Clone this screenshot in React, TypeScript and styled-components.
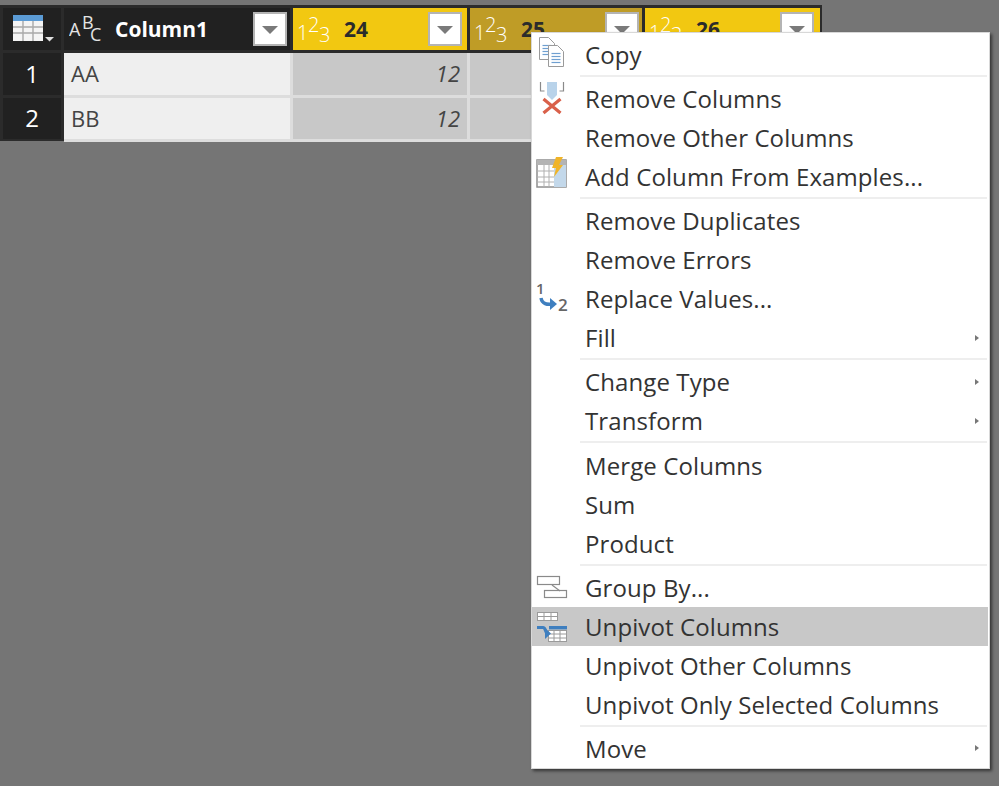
import React from "react";
import styled, { createGlobalStyle } from "styled-components";

const GlobalStyle = createGlobalStyle`
  html, body {
    margin: 0;
    padding: 0;
    background: #757575;
  }
  body {
    font-family: "Open Sans", "Noto Sans", sans-serif;
  }
`;

const Page = styled.div`
  position: relative;
  width: 999px;
  height: 786px;
  padding-top: 5px;
  box-sizing: border-box;
  overflow: hidden;
  background: #757575;
`;

const Table = styled.div`
  display: grid;
  width: 822px;
  box-sizing: border-box;
  grid-template-columns: 58px 226px 174px 172px 175px;
  grid-template-rows: 42px 42px 41px;
  column-gap: 3px;
  row-gap: 3px;
  padding: 3px 2px 2px 3px;
  background: #2b2b2b;
`;

const HeaderCell = styled.div<{ $bg: string; $right: number }>`
  display: flex;
  align-items: center;
  padding: 0 ${({ $right }) => $right}px 0 5px;
  background: ${({ $bg }) => $bg};
`;

const HeaderTitle = styled.span<{ $light?: boolean }>`
  flex: 1;
  margin-left: 10px;
  font-size: 21px;
  font-weight: 700;
  color: ${({ $light }) => ($light ? "#ffffff" : "#2b2b2b")};
`;

const FilterButton = styled.div`
  display: flex;
  flex: none;
  align-items: center;
  justify-content: center;
  width: 34px;
  height: 34px;
  box-sizing: border-box;
  border: 2px solid #b4b4b4;
  background: #ffffff;

  &::after {
    content: "";
    border-left: 8px solid transparent;
    border-right: 8px solid transparent;
    border-top: 8px solid #7a7a7a;
    margin-top: 1px;
  }
`;

const CornerCell = styled.div`
  display: flex;
  align-items: center;
  justify-content: center;
  padding-left: 4px;
  background: #212121;
`;

const RowNumber = styled.div`
  display: flex;
  align-items: center;
  justify-content: center;
  padding-bottom: 2px;
  background: #212121;
  color: #ffffff;
  font-size: 24px;
`;

const DataCell = styled.div<{ $numeric?: boolean }>`
  display: flex;
  align-items: center;
  justify-content: ${({ $numeric }) => ($numeric ? "flex-end" : "flex-start")};
  padding: 0 7px 2px;
  margin-bottom: -3px;
  border-bottom: 3px solid #dddddd;
  box-shadow: 3px 0 0 #dddddd;
  background: ${({ $numeric }) => ($numeric ? "#c8c8c8" : "#efefef")};
  color: #444444;
  font-size: 22px;
  font-style: ${({ $numeric }) => ($numeric ? "italic" : "normal")};
`;

const Menu = styled.div`
  position: absolute;
  left: 531px;
  top: 32px;
  width: 459px;
  height: 737px;
  box-sizing: border-box;
  padding: 2px 1px 0 0;
  background: #ffffff;
  border: 1px solid #d8d8d8;
  box-shadow: 2px 2px 3px rgba(0, 0, 0, 0.55);
`;

const MenuRow = styled.div<{ $active?: boolean }>`
  display: flex;
  align-items: center;
  height: 39px;
  background: ${({ $active }) => ($active ? "#c8c8c8" : "transparent")};
  color: #333333;
  font-size: 24px;
  letter-spacing: 0.1px;
`;

const IconSlot = styled.div`
  flex: none;
  width: 53px;
  height: 39px;
  padding-left: 2px;
  box-sizing: border-box;
`;

const Label = styled.span`
  flex: 1;
  white-space: nowrap;
`;

const SubArrow = styled.span`
  margin-right: 9px;
  border-left: 4px solid #777777;
  border-top: 3px solid transparent;
  border-bottom: 3px solid transparent;
`;

const Separator = styled.div`
  height: 2px;
  margin: 1px 1px 2.15px 48px;
  background: #eeeeee;
`;

const GlyphFont = "Open Sans, sans-serif";

const Svg: React.FC<{ children: React.ReactNode }> = ({ children }) => (
  <svg width="40" height="39" viewBox="0 0 40 39">
    {children}
  </svg>
);

const TableGlyph = () => (
  <svg width="42" height="28" viewBox="0 0 42 28">
    <rect x="0" y="0" width="30" height="26" fill="#f4f4f4" />
    <rect x="0" y="0" width="30" height="6" fill="#5b9bd5" />
    <path d="M0 12h30M0 18h30M10 6v20M20 6v20" stroke="#a8a8a8" strokeWidth="1.4" />
    <path d="M32 22h9l-4.5 4.5z" fill="#e0e0e0" />
  </svg>
);

const AbcGlyph = () => (
  <svg width="36" height="38" viewBox="0 0 36 38" fontFamily={GlyphFont} fill="#e4e4e4">
    <text x="0" y="26" fontSize="18">A</text>
    <text x="13" y="19" fontSize="18">B</text>
    <text x="21" y="31" fontSize="18">C</text>
  </svg>
);

const NumberGlyph = () => (
  <svg width="36" height="40" viewBox="0 0 36 40" fontFamily={GlyphFont} fontWeight="300" fill="#ffffff">
    <text x="-1" y="31" fontSize="20">1</text>
    <text x="10" y="23" fontSize="20">2</text>
    <text x="21" y="33" fontSize="20">3</text>
  </svg>
);

const Doc: React.FC<{ x: number; y: number; w: number; h: number }> = ({ x, y, w, h }) => {
  const lines: React.ReactNode[] = [];
  for (let ly = y + 8; ly < y + h - 2; ly += 3) {
    lines.push(<path key={ly} d={`M${x + 3} ${ly}h${w - 6}`} stroke="#6f9fd0" strokeWidth="1.2" />);
  }
  return (
    <g>
      <path
        d={`M${x} ${y}h${w - 6}l6 6v${h - 6}h${-w}z`}
        fill="#ffffff"
        stroke="#9a9a9a"
        strokeWidth="1"
      />
      {lines}
    </g>
  );
};

const CopyIcon = () => (
  <Svg>
    <Doc x={5.5} y={2.5} w={15} h={22} />
    <Doc x={14.5} y={10.5} w={15} h={21} />
  </Svg>
);

const RemoveIcon = () => (
  <Svg>
    <path d="M6.5 3v9h4M29.5 3v9h-4" fill="none" stroke="#8a8a8a" strokeWidth="1.2" />
    <path d="M13 3h10v13l-5 5-5-5z" fill="#b9d3ea" />
    <path d="M9.5 20l17 14M26.5 20l-17 14" stroke="#d9604a" strokeWidth="3.2" />
  </Svg>
);

const ExamplesIcon = () => (
  <Svg>
    <rect x="3" y="3" width="29" height="27" fill="#ffffff" stroke="#8f8f8f" strokeWidth="1.5" />
    <rect x="3" y="3" width="29" height="5" fill="#b4b4b4" />
    <rect x="20" y="8" width="12" height="22" fill="#c3d8ea" />
    <path d="M3 14h17M3 20h17M3 25h17M10 8v22M15 8v22" stroke="#b0b0b0" strokeWidth="1" />
    <path d="M22 0h7l-4 8h4l-9 12 2-9h-4z" fill="#f0b428" />
  </Svg>
);

const ReplaceIcon = () => (
  <Svg>
    <text x="2" y="15" fontSize="15" fontFamily={GlyphFont} fontWeight="600" fill="#666666">1</text>
    <path d="M7 19c1 6 6 7 12 6" fill="none" stroke="#3f7fbf" strokeWidth="3.4" />
    <path d="M16 19l7 6-7 6z" fill="#3f7fbf" />
    <text x="24" y="32" fontSize="17" fontFamily={GlyphFont} fontWeight="600" fill="#666666">2</text>
  </Svg>
);

const GroupIcon = () => (
  <Svg>
    <rect x="3.5" y="8.5" width="22" height="8" fill="#ffffff" stroke="#8a8a8a" strokeWidth="1.2" />
    <rect x="10.5" y="22.5" width="22" height="7" fill="#ffffff" stroke="#8a8a8a" strokeWidth="1.2" />
    <path d="M18 17l8 6" stroke="#8a8a8a" strokeWidth="1.2" />
  </Svg>
);

const UnpivotIcon = () => (
  <Svg>
    <rect x="3.5" y="5.5" width="20" height="8" fill="#ffffff" stroke="#9a9a9a" />
    <path d="M10 5v8M17 5v8M3 9.5h20" stroke="#9a9a9a" />
    <rect x="14.5" y="23.5" width="18" height="11" fill="#ffffff" stroke="#9a9a9a" />
    <path d="M20 23v11M26 23v11M14 27h18M14 31h18" stroke="#9a9a9a" />
    <rect x="15" y="19" width="18" height="3.4" fill="#3f7fbf" />
    <path d="M3 20.5h6c3 0 2 6 5 6" fill="none" stroke="#3f7fbf" strokeWidth="3.2" />
    <path d="M11 21l6 5.5-6 5.5z" fill="#3f7fbf" />
  </Svg>
);

type Entry = { label: string; icon?: React.ReactNode; sub?: boolean; active?: boolean };

const sections: Entry[][] = [
  [{ label: "Copy", icon: <CopyIcon /> }],
  [
    { label: "Remove Columns", icon: <RemoveIcon /> },
    { label: "Remove Other Columns" },
    { label: "Add Column From Examples...", icon: <ExamplesIcon /> },
  ],
  [
    { label: "Remove Duplicates" },
    { label: "Remove Errors" },
    { label: "Replace Values...", icon: <ReplaceIcon /> },
    { label: "Fill", sub: true },
  ],
  [
    { label: "Change Type", sub: true },
    { label: "Transform", sub: true },
  ],
  [{ label: "Merge Columns" }, { label: "Sum" }, { label: "Product" }],
  [
    { label: "Group By...", icon: <GroupIcon /> },
    { label: "Unpivot Columns", icon: <UnpivotIcon />, active: true },
    { label: "Unpivot Other Columns" },
    { label: "Unpivot Only Selected Columns" },
  ],
  [{ label: "Move", sub: true }],
];

export default function App() {
  return (
    <Page>
      <GlobalStyle />
      <Table>
        <CornerCell>
          <TableGlyph />
        </CornerCell>
        <HeaderCell $bg="#212121" $right={3}>
          <AbcGlyph />
          <HeaderTitle $light>Column1</HeaderTitle>
          <FilterButton />
        </HeaderCell>
        <HeaderCell $bg="#f2c811" $right={5}>
          <NumberGlyph />
          <HeaderTitle>24</HeaderTitle>
          <FilterButton />
        </HeaderCell>
        <HeaderCell $bg="#bf9c26" $right={3}>
          <NumberGlyph />
          <HeaderTitle>25</HeaderTitle>
          <FilterButton />
        </HeaderCell>
        <HeaderCell $bg="#f2c811" $right={6}>
          <NumberGlyph />
          <HeaderTitle>26</HeaderTitle>
          <FilterButton />
        </HeaderCell>

        <RowNumber>1</RowNumber>
        <DataCell>AA</DataCell>
        <DataCell $numeric>12</DataCell>
        <DataCell $numeric>12</DataCell>
        <DataCell $numeric>12</DataCell>

        <RowNumber>2</RowNumber>
        <DataCell>BB</DataCell>
        <DataCell $numeric>12</DataCell>
        <DataCell $numeric>12</DataCell>
        <DataCell $numeric>12</DataCell>
      </Table>

      <Menu>
        {sections.map((entries, i) => (
          <React.Fragment key={i}>
            {i > 0 && <Separator />}
            {entries.map((entry) => (
              <MenuRow key={entry.label} $active={entry.active}>
                <IconSlot>{entry.icon}</IconSlot>
                <Label>{entry.label}</Label>
                {entry.sub && <SubArrow />}
              </MenuRow>
            ))}
          </React.Fragment>
        ))}
      </Menu>
    </Page>
  );
}
